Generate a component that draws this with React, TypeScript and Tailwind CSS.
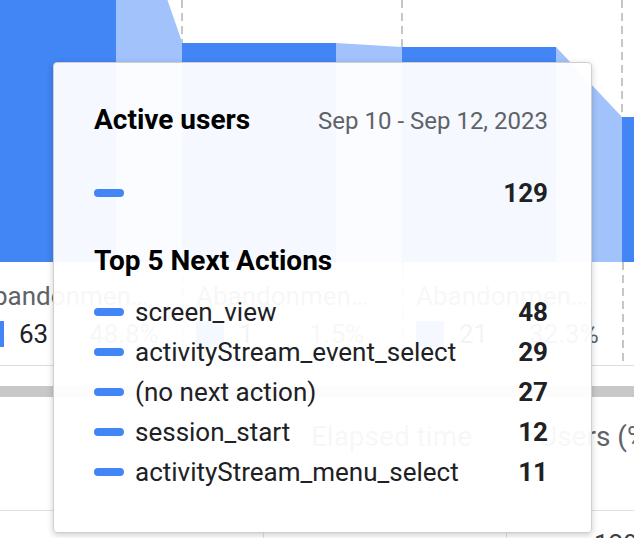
const steps = [
  { count: "63", rate: "48.8%" },
  { count: "1", rate: "1.5%" },
  { count: "21", rate: "32.3%" },
  { count: "", rate: "" },
];

const nextActions = [
  { name: "screen_view", value: 48 },
  { name: "activityStream_event_select", value: 29 },
  { name: "(no next action)", value: 27 },
  { name: "session_start", value: 12 },
  { name: "activityStream_menu_select", value: 11 },
];

function FunnelChart() {
  return (
    <svg width="634" height="262" viewBox="0 0 634 262" className="block">
      {[182, 402, 622].map((x) => (
        <line key={x} x1={x} x2={x} y1={0} y2={262} stroke="#c6c6c6" strokeWidth={2} strokeDasharray="8 5" />
      ))}
      <rect x={0} y={0} width={116} height={262} fill="#4285f4" />
      <polygon points="116,-149 182,42 182,262 116,262" fill="#a1c2fa" />
      <rect x={182} y={43} width={154} height={219} fill="#4285f4" />
      <polygon points="336,43 402,47 402,262 336,262" fill="#a1c2fa" />
      <rect x={402} y={47} width={154} height={215} fill="#4285f4" />
      <polygon points="556,47 622,117 622,262 556,262" fill="#a1c2fa" />
      <rect x={622} y={117} width={20} height={145} fill="#4285f4" />
    </svg>
  );
}

function Dash() {
  return <span className="w-[30px] h-[8px] rounded-full bg-[#4285f4] shrink-0" />;
}

export default function App() {
  return (
    <div className="relative w-[634px] h-[538px] overflow-hidden bg-white font-[Roboto,sans-serif]">
      <FunnelChart />

      {/* step legend under the bars */}
      <div className="flex ml-[-38px] h-[104px] border-b border-[#dadce0]">
        {steps.map((s, i) => (
          <div key={i} className="flex w-[220px] shrink-0">
            <div className="w-[2px] h-[101px] bg-[image:repeating-linear-gradient(to_bottom,#c6c6c6_0px,#c6c6c6_8px,transparent_8px,transparent_13px)]" />
            {s.count && (
              <div className="flex flex-col pl-[12px] pt-[19px] w-[218px]">
                <div className="text-[26px] leading-[30px] text-[#5f6368] whitespace-nowrap">Abandonmen…</div>
                <div className="flex items-center mt-[8px] h-[30px]">
                  <span className="w-[28px] h-[26px] bg-[#4285f4]" />
                  <span className="ml-[15px] w-[70px] text-[26px] leading-[30px] text-[#202124]">{s.count}</span>
                  <span className="text-[26px] leading-[30px] text-[#5f6368]">{s.rate}</span>
                </div>
              </div>
            )}
          </div>
        ))}
      </div>

      <div className="mt-[20px] h-[11px] bg-[#c8c8c8]" />

      {/* table below */}
      <div className="flex h-[114px] border-b border-[#e0e0e0]">
        <div className="w-[264px] shrink-0 border-r border-[#e0e0e0]" />
        <div className="w-[243px] shrink-0 border-r border-[#e0e0e0] pt-[24px] pr-[34px] text-right text-[28px] leading-[32px] text-[#5f6368] whitespace-nowrap">
          Elapsed time
        </div>
        <div className="flex-1 pt-[24px] pl-[32px] text-[28px] leading-[32px] text-[#5f6368] whitespace-nowrap">Users (%)</div>
      </div>
      <div className="flex h-[40px]">
        <div className="w-[264px] shrink-0 border-r border-[#e0e0e0]" />
        <div className="w-[243px] shrink-0 border-r border-[#e0e0e0]" />
        <div className="flex-1 pt-[18px] pl-[87px] text-[26px] leading-[30px] text-[#3c4043] whitespace-nowrap">129</div>
      </div>

      {/* hover tooltip */}
      <div className="absolute left-[53px] top-[62px] w-[539px] h-[471px] rounded-[4px] border border-[#cfcfcf] bg-[rgba(255,255,255,0.95)] shadow-[0_2px_6px_rgba(0,0,0,0.2)] pl-[40px] pr-[43px] pt-[41px]">
        <div className="flex items-baseline justify-between h-[32px]">
          <span className="text-[28px] leading-[32px] font-bold text-black">Active users</span>
          <span className="text-[24px] leading-[32px] text-[#5f6368]">Sep 10 - Sep 12, 2023</span>
        </div>
        <div className="flex items-center h-[40px] mt-[37px]">
          <Dash />
          <span className="ml-auto text-[26px] leading-[30px] font-bold text-[#202124]">129</span>
        </div>
        <div className="mt-[32px] text-[28px] leading-[32px] font-bold text-black">Top 5 Next Actions</div>
        <div className="mt-[15px] flex flex-col">
          {nextActions.map((a) => (
            <div key={a.name} className="flex items-center h-[40px]">
              <Dash />
              <span className="ml-[11px] text-[26px] leading-[30px] text-[#202124] whitespace-nowrap">{a.name}</span>
              <span className="ml-auto text-[26px] leading-[30px] font-bold text-[#202124]">{a.value}</span>
            </div>
          ))}
        </div>
      </div>
    </div>
  );
}
